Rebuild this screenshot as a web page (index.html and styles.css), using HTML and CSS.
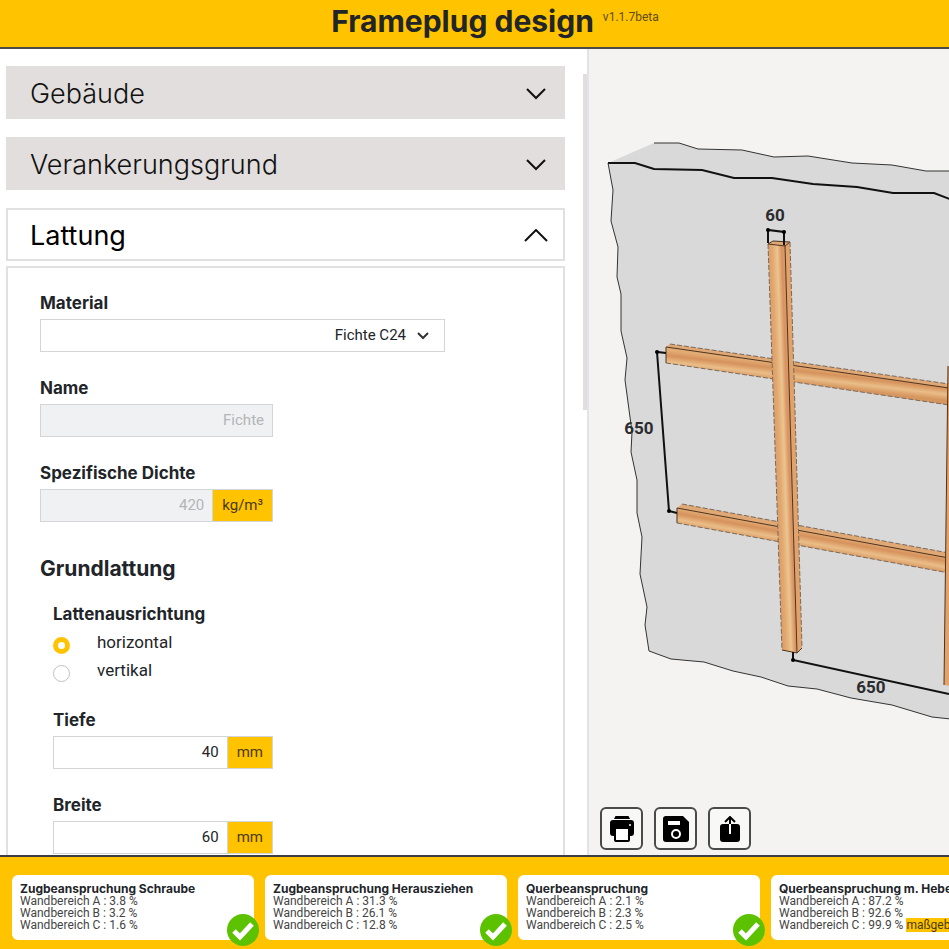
FILE: index.html
```
<!DOCTYPE html>
<html lang="de">
<head>
  <meta charset="UTF-8" />
  <meta name="viewport" content="width=device-width, initial-scale=1.0"/>
  <title>Frameplug design</title>
  <link rel="stylesheet" href="styles.css">
</head>
<body>
  <header class="topbar">
    <h1>Frameplug design</h1>
    <span class="version">v1.1.7beta</span>
  </header>

  <main class="workspace">
    <section class="sidebar">
      <div class="accordion">
        <button type="button" class="accordion-head">
          Gebäude
          <svg class="chevron" viewBox="0 0 24 14"><path d="M3 2 L12 11 L21 2"/></svg>
        </button>
        <button type="button" class="accordion-head">
          Verankerungsgrund
          <svg class="chevron" viewBox="0 0 24 14"><path d="M3 2 L12 11 L21 2"/></svg>
        </button>
        <button type="button" class="accordion-head open">
          Lattung
          <svg class="chevron" viewBox="0 0 24 14"><path d="M1 12 L12 1 L23 12"/></svg>
        </button>
      </div>

      <form class="accordion-body">
        <div class="field">
          <label for="material">Material</label>
          <div class="select-box">
            <select id="material"><option>Fichte C24</option></select>
            <svg viewBox="0 0 12 8"><path d="M1 1 L6 6 L11 1"/></svg>
          </div>
        </div>
        <div class="field">
          <label for="name">Name</label>
          <div class="input-group">
            <input id="name" type="text" value="Fichte" disabled>
          </div>
        </div>
        <div class="field">
          <label for="dichte">Spezifische Dichte</label>
          <div class="input-group">
            <input id="dichte" type="text" value="420" disabled>
            <span class="unit">kg/m³</span>
          </div>
        </div>

        <h2>Grundlattung</h2>
        <div class="subsection">
          <fieldset>
            <legend>Lattenausrichtung</legend>
            <label class="radio"><input type="radio" name="ausrichtung" checked>horizontal</label>
            <label class="radio"><input type="radio" name="ausrichtung">vertikal</label>
          </fieldset>
          <div class="field">
            <label for="tiefe">Tiefe</label>
            <div class="input-group">
              <input id="tiefe" type="text" value="40">
              <span class="unit">mm</span>
            </div>
          </div>
          <div class="field">
            <label for="breite">Breite</label>
            <div class="input-group">
              <input id="breite" type="text" value="60">
              <span class="unit">mm</span>
            </div>
          </div>
        </div>
      </form>
      <div class="scroll-thumb"></div>
    </section>

    <section class="viewer">
      <svg class="scene" viewBox="589 49 360 806" preserveAspectRatio="xMinYMin slice">
        <defs>
          <linearGradient id="woodV" gradientUnits="userSpaceOnUse" x1="760" y1="0" x2="777" y2="0" gradientTransform="skewX(2)">
            <stop offset="0" stop-color="#dc9f68"/>
            <stop offset=".2" stop-color="#e3a770"/>
            <stop offset=".5" stop-color="#ebc58f"/>
            <stop offset=".75" stop-color="#d99362"/>
            <stop offset="1" stop-color="#dc9a66"/>
          </linearGradient>
          <linearGradient id="woodH" gradientUnits="userSpaceOnUse" x1="800" y1="366" x2="798" y2="383">
            <stop offset="0" stop-color="#e3ab74"/>
            <stop offset=".3" stop-color="#d6925c"/>
            <stop offset=".65" stop-color="#eabd88"/>
            <stop offset="1" stop-color="#d6965f"/>
          </linearGradient>
          <linearGradient id="woodH2" gradientUnits="userSpaceOnUse" x1="812" y1="532" x2="809" y2="549">
            <stop offset="0" stop-color="#e3ab74"/>
            <stop offset=".3" stop-color="#d6925c"/>
            <stop offset=".65" stop-color="#eabd88"/>
            <stop offset="1" stop-color="#d6965f"/>
          </linearGradient>
        </defs>

        <!-- wall -->
        <path class="wall" d="M608 163 L654 143 L679 143 L698 149 L742 150 L774 157 L808 156 L852 163 L892 165 L926 171 L960 171 V720 L932 717 L892 705 L851 698 L817 689 L788 686 L761 677 L733 671 L704 662 L671 659 L649 651 L645 625 L647 607 L640 574 L642 537 L637 513 V480 L631 452 L632 432 L625 380 L627 358 L621 331 V294 L617 277 L618 247 L611 221 L613 190 Z"/>
        <path class="outline" d="M654 143 L679 143 L698 149 L742 150 L774 157 L808 156 L852 163 L892 165 L926 171 L960 171"/>
        <path class="outline strong" d="M608 163 L635 163 L654 169 L702 170 L734 178 L772 178 L813 184 L857 187 L893 193 L934 193 L960 203"/>
        <path class="outline" d="M608 163 L613 190 L611 221 L618 247 L617 277 L621 294 V331 L627 358 L625 380 L632 432 L631 452 L637 480 V513 L642 537 L640 574 L647 607 L645 625 L649 651 L671 659 L704 662 L733 671 L761 677 L788 686 L817 689 L851 698 L892 705 L932 717 L960 720"/>

        <!-- horizontal battens -->
        <path class="top-face" d="M666 347 L670 344 L949 384 V390 Z"/>
        <path d="M666 347 L949 388 V405 L666 363 Z" fill="url(#woodH)"/>
        <path class="edge" d="M666 347 L949 388 M666 347 V363"/>
        <path class="edge dashed" d="M666 363 L949 405 M670 344 L949 384"/>
        <path class="top-face" d="M677 508 L682 504 L949 553 V560 Z"/>
        <path d="M677 508 L949 558 V573 L677 523 Z" fill="url(#woodH2)"/>
        <path class="edge" d="M677 508 L949 558 M677 508 V523"/>
        <path class="edge dashed" d="M677 523 L949 573 M682 504 L949 553"/>

        <!-- vertical battens -->
        <path d="M768 244 L785 245 L797 653 L782 650 Z" fill="url(#woodV)"/>
        <path class="side-face" d="M785 245 L790 242 L802 647 L797 653 Z"/>
        <path class="top-face edge" d="M768 244 L773 241 L790 242 L785 246 Z"/>
        <path class="edge" d="M785 245 L797 653 L802 648 M782 650 L797 653"/>
        <path class="edge dashed" d="M768 244 L782 650 M790 242 L802 648"/>
        <path class="side-face" d="M948 366 H951 V686 L944 685 Z"/>
        <path class="edge" d="M948 366 L944 685"/>

        <!-- dimensions -->
        <path class="dim" d="M768 243 V230 L784 232 V245"/>
        <path class="dim" d="M666 353 L657 352 L669 511 L677 513"/>
        <path class="dim" d="M793 652 V660 L949 694"/>
        <circle cx="768" cy="230" r="2"/>
        <circle cx="784" cy="232" r="2"/>
        <circle cx="657" cy="352" r="2"/>
        <circle cx="669" cy="511" r="2"/>
        <circle cx="793" cy="660" r="2"/>
        <text x="775" y="221">60</text>
        <text x="639" y="434">650</text>
        <text x="871" y="693">650</text>
      </svg>

      <div class="tools">
        <button type="button" aria-label="Drucken">
          <svg viewBox="0 0 26 26">
            <path d="M6 1 Q6 0 7 0 h12 q1 0 1 1 l1 2 H5 Z"/>
            <path d="M4 4 H22 Q25 4 25 7 V17 Q25 20 22 20 H4 Q1 20 1 17 V7 Q1 4 4 4 Z"/>
            <rect x="6" y="12" width="14" height="13" rx="1" class="paper"/>
            <circle cx="21" cy="9" r="1" fill="#fff"/>
          </svg>
        </button>
        <button type="button" aria-label="Speichern">
          <svg viewBox="0 0 26 26">
            <path d="M3 0 H20 L26 6 V23 Q26 26 23 26 H3 Q0 26 0 23 V3 Q0 0 3 0 Z"/>
            <rect x="5" y="5" width="12" height="4" fill="#fff"/>
            <circle cx="13" cy="18" r="4" class="ring"/>
          </svg>
        </button>
        <button type="button" aria-label="Teilen">
          <svg viewBox="0 0 26 26">
            <rect x="3" y="8" width="20" height="18" rx="3"/>
            <path d="M13 8 V18" class="shaft"/>
            <path d="M13 8 V1 M8 6 L13 1 L18 6" class="arrow"/>
          </svg>
        </button>
      </div>
    </section>
  </main>

  <footer class="results">
    <article class="card">
      <h3>Zugbeanspruchung Schraube</h3>
      <p>Wandbereich A : 3.8 %</p>
      <p>Wandbereich B : 3.2 %</p>
      <p>Wandbereich C : 1.6 %</p>
      <svg class="check" viewBox="0 0 32 32"><circle cx="16" cy="16" r="16"/><path d="M7 17 L13 23 L25 10"/></svg>
    </article>
    <article class="card">
      <h3>Zugbeanspruchung Herausziehen</h3>
      <p>Wandbereich A : 31.3 %</p>
      <p>Wandbereich B : 26.1 %</p>
      <p>Wandbereich C : 12.8 %</p>
      <svg class="check" viewBox="0 0 32 32"><circle cx="16" cy="16" r="16"/><path d="M7 17 L13 23 L25 10"/></svg>
    </article>
    <article class="card">
      <h3>Querbeanspruchung</h3>
      <p>Wandbereich A : 2.1 %</p>
      <p>Wandbereich B : 2.3 %</p>
      <p>Wandbereich C : 2.5 %</p>
      <svg class="check" viewBox="0 0 32 32"><circle cx="16" cy="16" r="16"/><path d="M7 17 L13 23 L25 10"/></svg>
    </article>
    <article class="card">
      <h3>Querbeanspruchung m. Hebelarm</h3>
      <p>Wandbereich A : 87.2 %</p>
      <p>Wandbereich B : 92.6 %</p>
      <p>Wandbereich C : 99.9 % <mark>maßgebend</mark></p>
    </article>
  </footer>
</body>
</html>
```
FILE: styles.css
```
* {
  box-sizing: border-box;
}

body {
  margin: 0;
  height: 100vh;
  display: flex;
  flex-direction: column;
  overflow: hidden;
  font-family: Roboto, sans-serif;
  font-size: 16px;
  color: #212529;
  background: #fff;
}

h1, h2, h3, p, fieldset {
  margin: 0;
}

h1, h2, h3, legend, .field > label, .accordion-head {
  font-family: Inter, sans-serif;
  font-weight: 700;
}

.topbar {
  display: flex;
  justify-content: center;
  gap: 9px;
  height: 49px;
  padding: 0 0 0 41px;
  background: #ffc300;
  border-bottom: 2px solid #4a4a48;
}

.topbar h1 {
  font-size: 30px;
  line-height: 42px;
}

.version {
  font-size: 12px;
  line-height: 34px;
  color: #5f4d12;
}

.workspace {
  flex: 1;
  min-height: 0;
  display: flex;
}

.sidebar {
  position: relative;
  flex: 0 0 62.1%;
  padding: 17px 22px 0 6px;
  overflow: hidden;
  border-right: 2px solid #e2e2ea;
}

.scroll-thumb {
  position: absolute;
  top: 25px;
  right: 0;
  width: 4px;
  height: 336px;
  background: #e1dedd;
}

.accordion {
  display: flex;
  flex-direction: column;
  gap: 18px;
}

.accordion-head {
  display: flex;
  align-items: center;
  justify-content: space-between;
  height: 53px;
  padding: 2px 17px 0 24px;
  border: 0;
  background: #e1dedd;
  font-weight: 300;
  font-size: 27px;
  color: #111;
}

.accordion-head.open {
  padding: 2px 15px 0 22px;
  border: 2px solid #e1e1e1;
  background: #fff;
  font-weight: 400;
  color: #000;
}

.chevron {
  width: 24px;
  height: 14px;
  fill: none;
  stroke: #111;
  stroke-width: 2;
}

.accordion-body {
  margin-top: 5px;
  padding: 25px 32px;
  border: 2px solid #e1e1e1;
}

.field {
  margin-bottom: 26px;
}

.field > label,
legend {
  display: block;
  padding: 0;
  margin-bottom: 5px;
  font-size: 17px;
  line-height: 21px;
}

.input-group {
  display: flex;
  width: 233px;
  height: 33px;
}

.subsection .input-group {
  width: 220px;
}

input[type="text"],
select {
  flex: 1;
  min-width: 0;
  height: 33px;
  padding: 0 8px 2px;
  border: 1px solid #d3d5d8;
  border-radius: 0;
  background: #fff;
  font-family: Roboto, sans-serif;
  font-size: 15px;
  color: #212529;
  text-align: right;
}

input[type="text"]:disabled {
  background: #f0f1f3;
  color: #b4b5b7;
}

.unit {
  padding: 0 9px;
  border: 1px solid #d3d5d8;
  border-left: 0;
  background: #ffc300;
  font-size: 15px;
  line-height: 30px;
  color: #4a3a10;
}

.select-box {
  position: relative;
  width: 405px;
}

.select-box select {
  display: block;
  width: 100%;
  padding-right: 38px;
  appearance: none;
  text-align-last: right;
}

.select-box svg {
  position: absolute;
  top: 13px;
  right: 16px;
  width: 12px;
  height: 8px;
  fill: none;
  stroke: #333;
  stroke-width: 2;
}

h2 {
  font-size: 21px;
  line-height: 28px;
  padding-top: 7px;
}

.subsection {
  margin: 21px 0 0 13px;
}

fieldset {
  padding: 0;
  border: 0;
  margin-bottom: 26px;
}

legend {
  margin-bottom: 3px;
}

.radio {
  display: flex;
  align-items: center;
  gap: 27px;
  height: 28px;
  font-size: 17px;
}

.radio input {
  appearance: none;
  width: 17px;
  height: 17px;
  margin: 6px 0 0;
  border: 1px solid #bfc1c8;
  border-radius: 50%;
  background: #fff;
}

.radio input:checked {
  border: 5px solid #ffc300;
}

.viewer {
  position: relative;
  flex: 1;
  min-width: 0;
  background: #f4f3f2;
}

.scene {
  display: block;
  width: 100%;
  height: 100%;
}

.scene text {
  font-size: 17px;
  font-weight: 700;
  fill: #2b2b2f;
  text-anchor: middle;
}

.wall {
  fill: #d9d9d9;
}

.outline {
  fill: none;
  stroke: #333;
  stroke-width: 1;
}

.outline.strong {
  stroke: #111;
  stroke-width: 2;
}

.edge {
  fill: none;
  stroke: #4d3420;
  stroke-width: 1;
}

.top-face {
  fill: #e0a875;
}

.side-face {
  fill: #e2a36b;
}

.dashed {
  stroke: #7a6a5c;
  stroke-dasharray: 5 2;
}

.dim {
  fill: none;
  stroke: #111;
  stroke-width: 2;
}

.tools {
  position: absolute;
  left: 11px;
  bottom: 5px;
  display: flex;
  gap: 11px;
}

.tools button {
  display: flex;
  align-items: center;
  justify-content: center;
  width: 43px;
  height: 43px;
  padding: 0;
  border: 2px solid #4a4a4a;
  border-radius: 6px;
  background: #f8f8f7;
}

.tools svg {
  width: 26px;
  height: 26px;
}

.paper {
  fill: #fff;
  stroke: #000;
  stroke-width: 2;
}

.ring {
  fill: none;
  stroke: #fff;
  stroke-width: 2;
}

.arrow {
  fill: none;
  stroke: #000;
  stroke-width: 2;
}

.shaft {
  stroke: #fff;
  stroke-width: 2;
}

.results {
  display: flex;
  gap: 11px;
  height: 94px;
  padding: 18px 12px 9px;
  overflow: hidden;
  background: #ffc300;
  border-top: 2px solid #3b3f45;
}

.card {
  position: relative;
  flex: 0 0 242px;
  padding: 8px;
  border-radius: 6px;
  background: #fff;
  white-space: nowrap;
}

.card h3 {
  font-size: 12px;
  line-height: 12px;
}

.card p {
  font-size: 12px;
  line-height: 12px;
  color: #444;
}

.card mark {
  background: #ffc300;
  color: #4a3a10;
}

.check {
  position: absolute;
  right: -5px;
  bottom: -6px;
  width: 32px;
  height: 32px;
  fill: #5cc200;
}

.check path {
  fill: none;
  stroke: #fff;
  stroke-width: 5;
}
```
